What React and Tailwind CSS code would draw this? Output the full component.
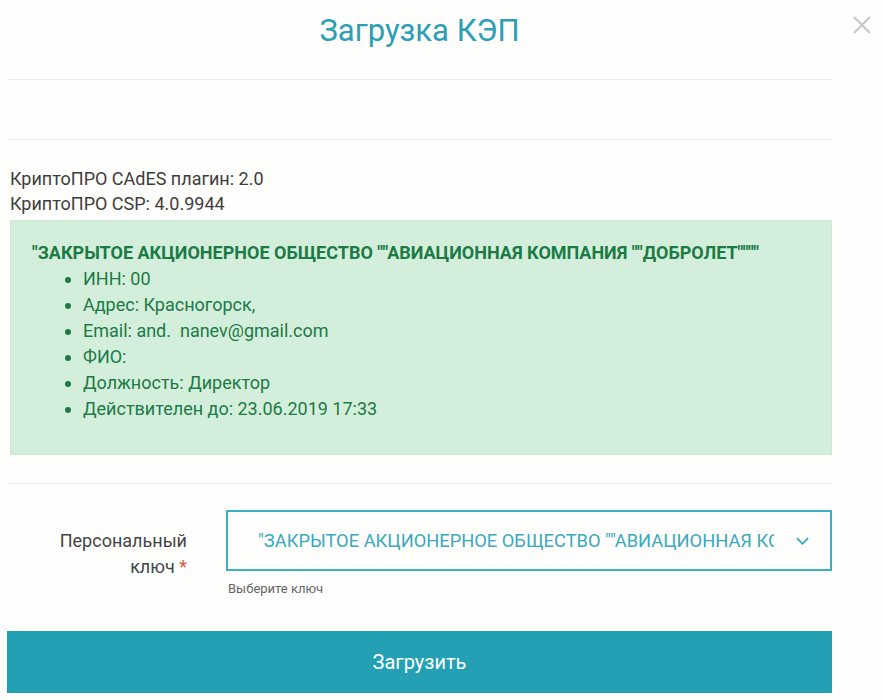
import React from "react";

const items = [
  "ИНН: 00",
  "Адрес: Красногорск,",
  "Email: and.\u00a0\u00a0nanev@gmail.com",
  "ФИО:",
  "Должность: Директор",
  "Действителен до: 23.06.2019 17:33",
];

export default function App() {
  return (
    <div
      className="relative w-[882px] h-[700px] bg-[#fefefc] overflow-hidden"
      style={{ fontFamily: "Roboto, 'Liberation Sans', sans-serif" }}
    >
      {/* close button */}
      <button className="absolute left-[852px] top-[15px] w-[20px] h-[20px] text-[#c8c8c8]">
        <svg viewBox="0 0 20 20" className="w-[20px] h-[20px]" fill="none" stroke="currentColor" strokeWidth="2.2">
          <path d="M2 2 L18 18 M18 2 L2 18" />
        </svg>
      </button>

      <div className="ml-[7px] w-[825px]">
        {/* header */}
        <div className="h-[80px] pt-[12px] border-b border-[#ebebeb] text-center">
          <h1 className="text-[31px] leading-[38px] text-[#2a9fb5]">Загрузка КЭП</h1>
        </div>
        <div className="h-[60px] border-b border-[#ebebeb]" />

        {/* versions */}
        <div className="pl-[3px] pt-[26px] text-[18px] leading-[25px] text-[#3d3d3d]">
          <div>КриптоПРО CAdES плагин: 2.0</div>
          <div>КриптоПРО CSP: 4.0.9944</div>
        </div>

        {/* cert info */}
        <div className="ml-[3px] mt-[4px] h-[235px] border border-[#c8ead2] bg-[#d3efdb] pl-[21px] pt-[19px] text-[#1b7a45] text-[18px] leading-[26px]">
          <div className="font-bold whitespace-nowrap">
            "ЗАКРЫТОЕ АКЦИОНЕРНОЕ ОБЩЕСТВО ""АВИАЦИОННАЯ КОМПАНИЯ ""ДОБРОЛЕТ""""
          </div>
          <ul className="list-disc pl-[51px]">
            {items.map((t) => (
              <li key={t}>{t}</li>
            ))}
          </ul>
        </div>

        <div className="mt-[28px] border-b border-[#ebebeb]" />

        {/* key select */}
        <div className="flex mt-[26px]">
          <div className="w-[180px] shrink-0 pt-[18px] text-right text-[18px] leading-[26px] text-[#444]">
            Персональный
            <br />
            ключ <span className="text-[#e5533d]">*</span>
          </div>
          <div className="ml-[39px] flex-1 min-w-0">
            <div className="h-[61px] border-2 border-[#3ab0c4] flex items-center">
              <div className="flex-1 min-w-0 overflow-hidden whitespace-nowrap pl-[30px] text-[18.3px] text-[#3aa9bd]">
                "ЗАКРЫТОЕ АКЦИОНЕРНОЕ ОБЩЕСТВО ""АВИАЦИОННАЯ КОМПАНИЯ ""ДОБРОЛЕТ""""
              </div>
              <div className="w-[56px] shrink-0 flex justify-center text-[#3aa9bd]">
                <svg viewBox="0 0 14 8" className="w-[13px] h-[8px]" fill="none" stroke="currentColor" strokeWidth="2">
                  <path d="M1 1 L7 7 L13 1" />
                </svg>
              </div>
            </div>
            <div className="pl-[2px] mt-[11px] text-[13px] leading-[14px] text-[#666]">Выберите ключ</div>
          </div>
        </div>

        {/* submit */}
        <button className="mt-[35px] w-full h-[62px] bg-[#23a0b3] text-white text-[20px]">
          Загрузить
        </button>
      </div>
    </div>
  );
}
